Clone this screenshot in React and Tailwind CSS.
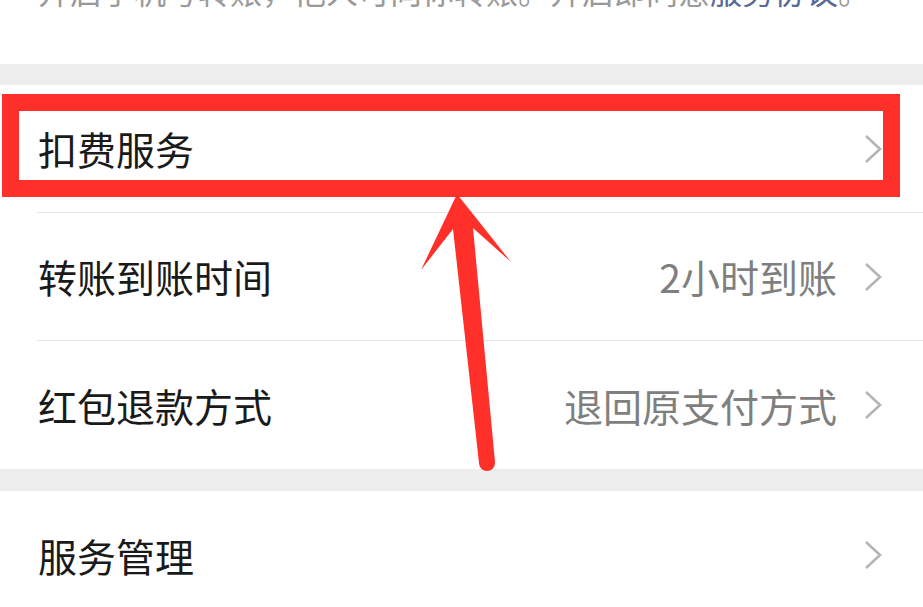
import React from "react";

const font = { fontFamily: '"Noto Sans CJK SC", "Noto Sans", sans-serif' };

function Chevron() {
  return (
    <svg width="18" height="30" viewBox="0 0 18 30" className="shrink-0">
      <polyline points="2,2 16,15 2,28" fill="none" stroke="#b5b5b5" strokeWidth="2.6" strokeLinejoin="miter" />
    </svg>
  );
}

function Row({ label, value, last }) {
  return (
    <div className="flex bg-white pl-[37px]">
      <div className={`flex h-[128px] flex-1 items-center pl-[1px] pr-[41px] ${last ? "" : "border-b border-[#e6e6e6]"}`}>
        <span className="flex-1 text-[39px] leading-none text-[#1a1a1a]">{label}</span>
        {value && <span className="mr-[27px] text-[39px] leading-none text-[#7f7f7f]">{value}</span>}
        <Chevron />
      </div>
    </div>
  );
}

export default function App() {
  return (
    <div className="relative h-[607px] w-[923px] overflow-hidden bg-white" style={font}>
      <div className="h-[64px] overflow-hidden bg-white">
        <div className="-mt-[26px] whitespace-nowrap pl-[38px] text-[32px] leading-[32px] text-[#9a9a9a]">
          开启手机号转账，他人可向你转账。开启即同意<span className="text-[#576b95]">服务协议</span>。
        </div>
      </div>
      <div className="h-[21px] bg-[#ededed]" />
      <Row label="扣费服务" />
      <Row label="转账到账时间" value="2小时到账" />
      <Row label="红包退款方式" value="退回原支付方式" last />
      <div className="h-[22px] bg-[#ededed]" />
      <Row label="服务管理" last />

      <div className="absolute left-[2px] top-[94px] h-[103px] w-[898px] border-[17px] border-[#ff2f29]" />
      <svg className="absolute left-0 top-0" width="923" height="607" viewBox="0 0 923 607">
        <polygon points="457,194 511,262 473,228 495,462 479,463 453,229 421,270" fill="#ff2f29" />
        <circle cx="487" cy="463" r="8" fill="#ff2f29" />
      </svg>
    </div>
  );
}
